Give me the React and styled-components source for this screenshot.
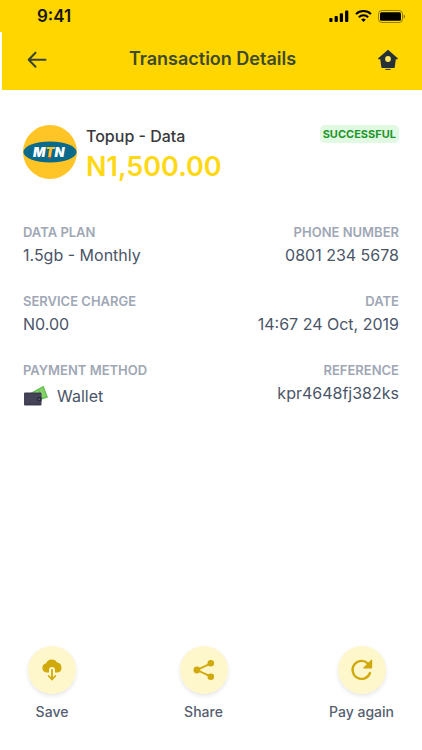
import React from 'react'
import styled, { createGlobalStyle } from 'styled-components'

const GlobalStyle = createGlobalStyle`
* {
    box-sizing: border-box;
}
body {
    margin: 0;
    background-color: #ffffff;
    font-family: Inter, "Liberation Sans", sans-serif;
    color: #4a5568;
}
`
const Page = styled.div`
min-height: 100vh;
display: flex;
flex-direction: column;
`
const StatusBar = styled.div`
height: 32px;
padding: 0 17px 0 37px;
display: flex;
align-items: center;
justify-content: space-between;
background-color: #ffd600;
`
const Time = styled.span`
font-size: 17px;
line-height: 32px;
font-weight: 600;
color: #17150a;
`
const StatusIcons = styled.div`
display: flex;
align-items: center;
gap: 6px;
`
const Header = styled.header`
height: 58px;
margin-left: 2px;
padding: 0 22px 4px 23px;
display: flex;
align-items: center;
justify-content: space-between;
background-color: #ffd600;
`
const Title = styled.h1`
margin: 0;
font-size: 18px;
line-height: 24px;
font-weight: 600;
color: #3d4a2b;
`
const IconButton = styled.button`
display: flex;
padding: 0;
border: none;
background: none;
cursor: pointer;
`
const Summary = styled.section`
display: flex;
align-items: flex-start;
padding: 34px 23px 0;
`
const Info = styled.div`
flex: 1;
margin-left: 9px;
`
const Product = styled.h2`
margin: 0;
font-size: 16px;
line-height: 24px;
font-weight: 500;
color: #38393d;
`
const Amount = styled.p`
margin: 0;
font-size: 27px;
line-height: 38px;
font-weight: 600;
color: #ffd814;
`
const Badge = styled.span`
margin-top: 1px;
padding: 0 3px;
border-radius: 5px;
font-size: 11px;
line-height: 18px;
font-weight: 700;
color: #1f962b;
background-color: #e1f8e3;
`
const Details = styled.dl`
margin: 36px 0 0;
padding: 0 23px;
display: grid;
grid-template-columns: auto auto;
justify-content: space-between;
row-gap: 24px;
`
const Detail = styled.div`
text-align: ${props => props.$end ? 'right' : 'left'};
`
const Label = styled.dt`
font-size: 13px;
line-height: 20px;
font-weight: 600;
color: #9fa7b5;
`
const Value = styled.dd`
display: flex;
align-items: center;
justify-content: ${props => props.$end ? 'flex-end' : 'flex-start'};
gap: 8px;
margin: ${props => props.$icon ? '4px' : '1px'} 0 0;
font-size: 16px;
line-height: 24px;
`
const Actions = styled.footer`
display: flex;
justify-content: space-between;
margin-top: auto;
padding: 24px 28px 28px 26px;
`
const Action = styled.button`
display: flex;
flex-direction: column;
align-items: center;
gap: 8px;
min-width: 52px;
padding: 0;
border: none;
background: none;
font-family: inherit;
font-size: 14px;
line-height: 20px;
font-weight: 500;
color: #566070;
cursor: pointer;
`
const Circle = styled.span`
display: flex;
align-items: center;
justify-content: center;
width: 48px;
height: 48px;
border-radius: 50%;
background-color: #fff7cc;
box-shadow: 0 2px 4px rgba(0, 0, 0, 0.1);
`

const SignalIcon = () => (
    <svg width="20" height="12" viewBox="0 0 20 12" aria-hidden="true">
        <rect x="0.3" y="8" width="3.2" height="4" rx="0.9" />
        <rect x="5.6" y="6" width="3.2" height="6" rx="0.9" />
        <rect x="10.8" y="3.3" width="3.2" height="8.7" rx="0.9" />
        <rect x="16.1" y="0.5" width="3.2" height="11.5" rx="0.9" />
    </svg>
)

const WifiIcon = () => (
    <svg width="17" height="12" viewBox="0 0 17 12" fill="none" stroke="#000" strokeWidth="2" aria-hidden="true">
        <path d="M1 4.1a10.8 10.8 0 0 1 15 0" />
        <path d="M3.8 7.2a6.8 6.8 0 0 1 9.4 0" />
        <path d="M8.5 12 6.2 9.6a3.4 3.4 0 0 1 4.6 0Z" fill="#000" stroke="none" />
    </svg>
)

const BatteryIcon = () => (
    <svg width="27" height="13" viewBox="0 0 27 13" aria-hidden="true">
        <rect x="0.5" y="0.5" width="24" height="12" rx="3.5" fill="none" stroke="#000" strokeOpacity="0.4" />
        <rect x="2" y="2.2" width="21" height="8.6" rx="1.6" />
        <path d="M25.7 4.5v4a2.2 2.2 0 0 0 0-4" fillOpacity="0.5" />
    </svg>
)

const BackIcon = () => (
    <svg width="24" height="24" viewBox="0 0 24 24" fill="none" stroke="#38452b" strokeWidth="2" strokeLinecap="round" strokeLinejoin="round">
        <path d="M20.5 12.8H4M10.5 5.8l-6.8 7 6.8 7" />
    </svg>
)

const HomeIcon = () => (
    <svg width="24" height="24" viewBox="0 0 24 24">
        <path d="M12 2.8 21.7 11.3c.4.5.1 1-.5 1h-1.4l-1 7.6c-.1.8-.6 1.2-1.3 1.2H6.6c-.7 0-1.2-.4-1.3-1.2l-1-7.6H2.7c-.6 0-.9-.5-.5-1Z" fill="#253136" />
        <circle cx="12" cy="12" r="2.9" fill="#ffe65c" />
        <path d="M9.8 22.4h4.4" stroke="#253136" strokeWidth="1" strokeLinecap="round" />
    </svg>
)

const MtnLogo = () => (
    <svg width="54" height="56" viewBox="0 0 54 56" role="img" aria-label="MTN logo">
        <circle cx="27" cy="28" r="27" fill="#ffc425" />
        <ellipse cx="27" cy="28" rx="26.6" ry="10.6" fill="#096a8c" />
        <path d="M25.4 27h3.4l-.8 6.4a1.2 1.2 0 0 1-2.4 0Z" fill="#e0422f" />
        <text x="10" y="33" fontFamily='Inter, "Liberation Sans", sans-serif' fontSize="13" fontWeight="900" fontStyle="italic" fill="#fff">
            M<tspan fill="#ffc425">T</tspan>N
        </text>
    </svg>
)

const WalletIcon = () => (
    <svg width="26" height="22" viewBox="0 0 26 22" aria-hidden="true">
        <path d="m7 8.2 13.5-7.4L25 12.5l-7 2.2Z" fill="#62bd4f" />
        <path d="m9 8.4 10.8-6 3.4 9.2-5.2 1.8Z" fill="#85d268" />
        <path d="m15.5 4.6 3.4 8" stroke="#55ad47" strokeWidth="0.8" />
        <rect x="1" y="7.5" width="17.5" height="13" rx="1" fill="#454358" />
        <path d="M1.5 8.7H18M1.5 19.2H18" stroke="#35334a" strokeWidth="0.8" />
        <path d="M18.5 12h-2.3a2.2 2.2 0 0 0 0 4.4h2.3Z" fill="#2c2a3d" />
        <circle cx="16.2" cy="14.2" r="0.8" fill="#78758a" />
    </svg>
)

const SaveIcon = () => (
    <svg width="24" height="24" viewBox="0 0 24 24" fill="none">
        <path d="M6.4 14.6a4.8 4.8 0 0 1-.3-9.4 6.2 6.2 0 0 1 11-.6 5.1 5.1 0 0 1 .5 10H15V12a3 3 0 0 0-6 0v2.6Z" fill="#d0a90d" />
        <path d="M12 12v9M8.7 18l3.3 3.5 3.3-3.5" stroke="#d0a90d" strokeWidth="1.8" strokeLinecap="round" strokeLinejoin="round" />
    </svg>
)

const ShareIcon = () => (
    <svg width="24" height="24" viewBox="0 0 24 24" fill="#d0a90d">
        <path d="M19 5.3 5 12l14 6.7" fill="none" stroke="#d0a90d" strokeWidth="1.9" />
        <circle cx="4.9" cy="12" r="3.4" />
        <circle cx="18.8" cy="5.3" r="3.3" />
        <circle cx="18.8" cy="18.7" r="3.3" />
    </svg>
)

const RepeatIcon = () => (
    <svg width="24" height="24" viewBox="0 0 24 24" fill="none">
        <path d="M20 15a9 9 0 1 1-2.1-9.5l1.7 1.9" stroke="#d0a90d" strokeWidth="2.3" strokeLinecap="round" />
        <path d="M21.2 1.8c.5-.4 1-.2 1 .4v7.6c0 .5-.3.8-.8.8h-7.6c-.6 0-.8-.6-.4-1Z" fill="#d0a90d" />
    </svg>
)

const details = [
    { label: 'DATA PLAN', value: '1.5gb - Monthly' },
    { label: 'PHONE NUMBER', value: '0801 234 5678', end: true },
    { label: 'SERVICE CHARGE', value: 'N0.00' },
    { label: 'DATE', value: '14:67 24 Oct, 2019', end: true },
    { label: 'PAYMENT METHOD', value: 'Wallet', icon: <WalletIcon /> },
    { label: 'REFERENCE', value: 'kpr4648fj382ks', end: true },
]

const actions = [
    { name: 'Save', icon: <SaveIcon /> },
    { name: 'Share', icon: <ShareIcon /> },
    { name: 'Pay again', icon: <RepeatIcon /> },
]

const App = () => {
    return (
        <Page>
            <GlobalStyle />
            <StatusBar>
                <Time>9:41</Time>
                <StatusIcons>
                    <SignalIcon />
                    <WifiIcon />
                    <BatteryIcon />
                </StatusIcons>
            </StatusBar>
            <Header>
                <IconButton aria-label="Back"><BackIcon /></IconButton>
                <Title>Transaction Details</Title>
                <IconButton aria-label="Home"><HomeIcon /></IconButton>
            </Header>
            <Summary>
                <MtnLogo />
                <Info>
                    <Product>Topup - Data</Product>
                    <Amount>N1,500.00</Amount>
                </Info>
                <Badge>SUCCESSFUL</Badge>
            </Summary>
            <Details>
                {details.map(item => (
                    <Detail key={item.label} $end={item.end}>
                        <Label>{item.label}</Label>
                        <Value $end={item.end} $icon={Boolean(item.icon)}>
                            {item.icon}
                            {item.value}
                        </Value>
                    </Detail>
                ))}
            </Details>
            <Actions>
                {actions.map(action => (
                    <Action key={action.name}>
                        <Circle>{action.icon}</Circle>
                        {action.name}
                    </Action>
                ))}
            </Actions>
        </Page>
    )
}

export default App
